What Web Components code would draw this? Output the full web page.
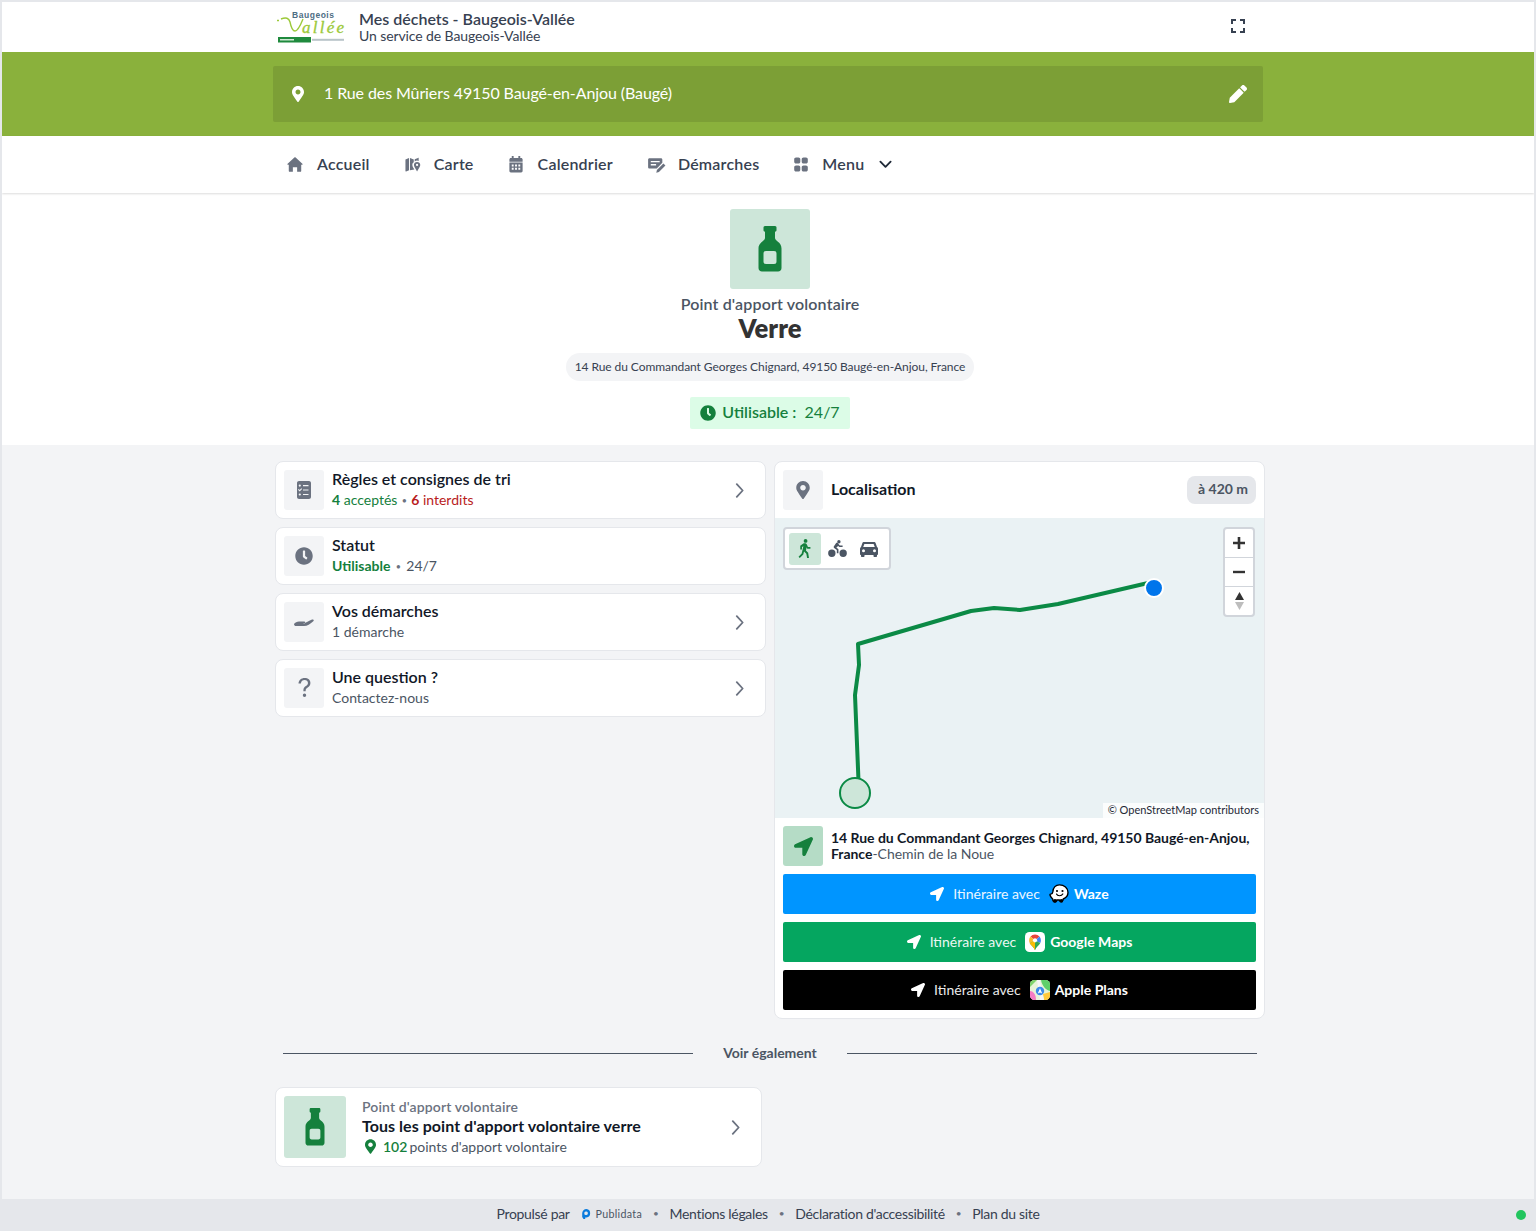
<!DOCTYPE html>
<html lang="fr">
<head>
<meta charset="utf-8">
<title>Mes déchets - Baugeois-Vallée</title>
<style>
  html, body { margin: 0; padding: 0; }
  body { font-family: Lato, "Liberation Sans", sans-serif; color: #111827; background: #e5e7eb; }
  .ok { color: #15803d; }
  .ko { color: #b91c1c; }
  .strong { font-weight: 700; }
  .dot { color: #6b7280; font-size: 9px; margin: 0 2px; vertical-align: 1px; }
  .dot.wide { margin: 0 3px; }
</style>
</head>
<body>

<md-page>
  <md-header></md-header>
  <md-address-bar>1 Rue des Mûriers 49150 Baugé-en-Anjou (Baugé)</md-address-bar>
  <md-nav>
    <md-nav-item icon="home" size="16" gap="14">Accueil</md-nav-item>
    <md-nav-item icon="map" size="18" gap="12">Carte</md-nav-item>
    <md-nav-item icon="calendar" size="16" gap="14">Calendrier</md-nav-item>
    <md-nav-item icon="edit" size="20" gap="11">Démarches</md-nav-item>
    <md-nav-item icon="grid" size="16" gap="13" more>Menu</md-nav-item>
  </md-nav>
  <md-hero></md-hero>
  <md-main>
    <div slot="left">
      <md-info-row icon="list" chevron>
        <span slot="title">Règles et consignes de tri</span>
        <span class="ok"><b class="strong">4</b> acceptés</span><span class="dot"> • </span><span class="ko"><b class="strong">6</b> interdits</span>
      </md-info-row>
      <md-info-row icon="clock">
        <span slot="title">Statut</span>
        <span class="ok strong">Utilisable</span><span class="dot wide"> • </span>24/7
      </md-info-row>
      <md-info-row icon="hand" chevron>
        <span slot="title">Vos démarches</span>
        1 démarche
      </md-info-row>
      <md-info-row icon="question" chevron>
        <span slot="title">Une question ?</span>
        Contactez-nous
      </md-info-row>
    </div>
    <md-map-card slot="right">
      <md-route-button color="#0095ff" brand="waze">Waze</md-route-button>
      <md-route-button color="#05a660" brand="google">Google Maps</md-route-button>
      <md-route-button color="#000000" brand="apple">Apple Plans</md-route-button>
    </md-map-card>
  </md-main>
  <md-see-also></md-see-also>
  <md-footer></md-footer>
</md-page>

<script>
// shapes for md-icon, everything is filled with currentColor
const ICONS = {
  pin: ['0 0 384 512', 'M172.268 501.67C26.97 291.031 0 261.6 0 192 0 85.961 85.961 0 192 0s192 85.961 192 192c0 69.6-26.97 99.031-172.268 309.67-9.535 13.774-29.93 13.773-39.464 0zM192 272c44.183 0 80-35.817 80-80s-35.817-80-80-80-80 35.817-80 80 35.817 80 80 80z'],
  pencil: ['0 0 512 512', 'M497.9 142.1l-46.1 46.1c-4.7 4.7-12.3 4.7-17 0l-111-111c-4.7-4.7-4.7-12.3 0-17l46.1-46.1c18.7-18.7 49.1-18.7 67.9 0l60.1 60.1c18.8 18.7 18.8 49.1 0 67.9zM284.2 99.8L21.6 362.4.4 483.9c-2.9 16.4 11.4 30.6 27.8 27.8l121.5-21.3 262.6-262.6c4.7-4.7 4.7-12.3 0-17l-111-111c-4.8-4.7-12.4-4.7-17.1 0z'],
  clock: ['0 0 512 512', 'M256,8C119,8,8,119,8,256S119,504,256,504,504,393,504,256,393,8,256,8Zm92.49,313h0l-20,25a16,16,0,0,1-22.49,2.5h0l-67-49.72a40,40,0,0,1-15-31.23V112a16,16,0,0,1,16-16h32a16,16,0,0,1,16,16V256l58,42.5A16,16,0,0,1,348.49,321Z'],
  arrow: ['0 0 512 512', 'M444.52 3.52L28.74 195.42c-47.97 22.39-31.98 92.75 19.19 92.75h175.91v175.91c0 51.17 70.36 67.17 92.75 19.19l191.9-415.78c15.99-38.39-25.59-79.97-63.97-63.97z'],
  expand: ['0 0 16 16', 'M1 1h5v2H3v3H1zM10 1h5v5h-2V3h-3zM1 10h2v3h3v2H1zM13 10h2v5h-5v-2h3z'],
  home: ['0 0 18 18', 'M9 .8c.3 0 .5.1.7.3l7.600 7c.5.5.2 1.300-.5 1.300H16v6.800c0 .6-.4 1-1 1h-3.600v-5H6.600v5H3c-.6 0-1-.4-1-1V9.400H1.200c-.7 0-1-.8-.5-1.300l7.600-7c.2-.2.4-.3.7-.3z'],
  map: ['0 0 18 18', 'M1 3.800 4.800 2v13l-3.100 1.400c-.4.200-.7 0-.7-.4zM5.800 2l4 1.600v3.100c-1 .6-1.500 1.600-1.500 2.700 0 1.500 1 3 2.200 4.800l-4.700.8zM10.800 3.500l3.500-1.500c.4-.2.700 0 .7.400v2.800a4 4 0 0 0-4.200.6zM13.300 6.300c1.900 0 3.400 1.400 3.400 3.200 0 1.800-1.800 3.900-3.400 6.900-1.600-3-3.300-5.100-3.300-6.900 0-1.800 1.400-3.200 3.300-3.200zm0 2a1.200 1.200 0 1 0 0 2.400 1.200 1.200 0 0 0 0-2.400z'],
  calendar: ['0 0 16 18', 'M3.500 0h2v2h5V0h2v2h1c.8 0 1.500.7 1.500 1.500V6H1V3.500C1 2.700 1.700 2 2.500 2h1zM1 7h14v9c0 .8-.7 1.500-1.500 1.500h-11C1.700 17.500 1 16.800 1 16zm2.500 2v2h2V9zm3.500 0v2h2V9zm3.500 0v2h2V9zm-7 3.500v2h2v-2zm3.500 0v2h2v-2zm3.500 0v2h2v-2z'],
  edit: ['0 0 22 18', 'M2.500 1.500h13c.8 0 1.500.7 1.500 1.500v3.600l-5.700 5.700-.4.700H2.500c-.8 0-1.500-.7-1.500-1.500V3c0-.8.7-1.500 1.500-1.500zM4 4.500V6h10V4.500zm0 3.500v1.500h6V8zM18.200 7.300l2.300 2.300-7.300 7.300-3 .7.700-3z'],
  grid: ['0 0 16 16', 'M3 1h2.500c1 0 1.800.8 1.800 1.800v2.400c0 1-.8 1.800-1.800 1.800H3c-1 0-1.800-.8-1.800-1.800V2.800C1.200 1.800 2 1 3 1zM10.500 1H13c1 0 1.800.8 1.800 1.800v2.400c0 1-.8 1.800-1.800 1.800h-2.500c-1 0-1.800-.8-1.800-1.800V2.800c0-1 .8-1.800 1.800-1.800zM3 9h2.500c1 0 1.800.8 1.800 1.800v2.400c0 1-.8 1.800-1.800 1.800H3c-1 0-1.800-.8-1.800-1.800v-2.400C1.200 9.800 2 9 3 9zM10.500 9H13c1 0 1.800.8 1.800 1.800v2.400c0 1-.8 1.800-1.800 1.800h-2.500c-1 0-1.800-.8-1.800-1.800v-2.400c0-1 .8-1.800 1.800-1.800z'],
  bottle: ['0 0 24 46', 'M7 0h10c1 0 1.500.8 1.500 1.500v2.500c0 1-.5 1.700-1.500 1.800v6.200c0 3 6.500 4 6.500 10.500V42c0 2-1.500 3.500-3.500 3.500H4C2 45.500.5 44 .5 42V22.500C.5 16 7 15 7 12V5.800C6 5.700 5.500 5 5.500 4V1.500C5.500.8 6 0 7 0zM8 25c-1.700 0-2.500.8-2.500 2.500v8c0 1.700.8 2.500 2.500 2.500h8c1.700 0 2.500-.8 2.500-2.500v-8c0-1.700-.8-2.500-2.500-2.500z'],
  list: ['0 0 14 18', 'M2 0h10c1.100 0 2 .9 2 2v14c0 1.100-.9 2-2 2H2c-1.100 0-2-.9-2-2V2C0 .9.9 0 2 0zm.8 3.500a1.100 1.100 0 1 0 0 2.200 1.100 1.100 0 0 0 0-2.200zM6 4v1.200h5.500V4zm-3.300 4.900L1.800 8 1 8.800l1.700 1.700 2.400-2.500-.8-.8zM6 8.400v1.200h5.500V8.400zm-3.200 4a1.100 1.100 0 1 0 0 2.200 1.100 1.100 0 0 0 0-2.200zM6 12.900v1.200h5.500v-1.200z'],
  hand: ['0 0 20 9', 'M0 6C1 4.500 3 3.500 5 3.500h5c1.500 0 1.500 2 0 2H8c3 .5 6-2.500 10-4 1.500-.5 2.500 1 1 2C16 6 13.500 8 10 8H2C1 8 0 7.500 0 6z'],
  question: ['0 0 14 22', 'M7.200 0C10.900 0 13.500 2.200 13.500 5.400c0 2.500-1.300 3.800-3 5-1.500 1-2.200 1.700-2.200 3.200v.9H5.800v-1.200c0-2.100 1-3.200 2.700-4.400 1.400-1 2.300-1.900 2.300-3.500C10.800 3.500 9.300 2.300 7.100 2.300 4.900 2.300 3.300 3.600 3 6H.4C.7 2.400 3.300 0 7.200 0zM7 17a1.900 1.900 0 1 1 0 3.800A1.900 1.900 0 0 1 7 17z'],
  walk: ['0 0 14 20', 'M7.600 0a2 2 0 1 1 0 4 2 2 0 0 1 0-4zM5.200 4.800c.8-.4 2-.5 2.800 0 .7.400 1 1 1.300 1.700l.8 2h2.600v1.800H9.400L8.700 8.700 8 12l2.300 2.400.9 5.600H9.200l-.8-4.600L6 13.200 5.200 16.300 1.500 20 .2 18.700l3.300-3.500L5.300 7.600 3.800 8.300V11H2V7.200z'],
  bike: ['0 0 20 18', 'M11.500 0a1.800 1.800 0 1 1 0 3.600 1.800 1.800 0 0 1 0-3.600zM8.400 3.400c.6-.5 1.500-.5 2 .1l2 2.300h3v1.700H12L10.700 6.300 8.800 8l2.200 1.700V14H9.300v-3.400L6.400 8.400c-.6-.5-.6-1.500 0-2zM4 10.100a3.900 3.900 0 1 1 0 7.800 3.900 3.900 0 0 1 0-7.800zM16 10.100a3.900 3.900 0 1 1 0 7.800 3.900 3.900 0 0 1 0-7.800z'],
  car: ['0 0 18 16', 'M4 1h10c.8 0 1.500.5 1.700 1.200L17 6c.6.300 1 1 1 1.700V13c0 .5-.4 1-1 1v1c0 .6-.4 1-1 1h-1.500c-.6 0-1-.4-1-1v-1h-9v1c0 .6-.4 1-1 1H2c-.6 0-1-.4-1-1v-1c-.6 0-1-.5-1-1V7.700C0 7 .4 6.300 1 6l1.300-3.800C2.500 1.500 3.200 1 4 1zm.4 2L3.200 6h11.600l-1.200-3zM3.500 8.300a1.500 1.500 0 1 0 0 3 1.500 1.500 0 0 0 0-3zm11 0a1.500 1.500 0 1 0 0 3 1.500 1.500 0 0 0 0-3z'],
  plus: ['0 0 12 12', 'M4.700 0h2.600v4.700H12v2.600H7.300V12H4.700V7.300H0V4.700h4.700z'],
  minus: ['0 0 12 12', 'M0 4.800h12v2.400H0z'],
  'chevron-right': ['0 0 10 16', 'M2 1l6.500 7L2 15', 'stroke'],
  'chevron-down': ['0 0 14 9', 'M1.500 1.500L7 7l5.500-5.500', 'stroke']
};

class MdIcon extends HTMLElement {
  connectedCallback() {
    const shape = ICONS[this.getAttribute('name')];
    const w = this.getAttribute('width') || 16;
    const h = this.getAttribute('height') || w;
    const paint = shape[2] ? 'fill="none" stroke="currentColor" stroke-width="2" stroke-linecap="round" stroke-linejoin="round"' : 'fill="currentColor" fill-rule="evenodd"';
    this.attachShadow({mode: 'open'}).innerHTML =
      '<style>:host { display: inline-flex; flex: none; } svg { display: block; }</style>' +
      '<svg width="' + w + '" height="' + h + '" viewBox="' + shape[0] + '"><path ' + paint + ' d="' + shape[1] + '"/></svg>';
  }
}
customElements.define('md-icon', MdIcon);

// small helper so every element below reads the same
function define(tag, html, extra) {
  const tpl = document.createElement('template');
  tpl.innerHTML = html;
  class El extends HTMLElement {
    constructor() {
      super();
      this.attachShadow({mode: 'open'}).appendChild(tpl.content.cloneNode(true));
    }
    connectedCallback() {
      if (extra) extra(this, this.shadowRoot);
    }
  }
  customElements.define(tag, El);
}

define('md-page', `
  <style>
    :host { height: 1229px; margin: 2px 2px 0; background: #f3f4f6; overflow: hidden; display: flex; flex-direction: column; }
  </style>
  <slot></slot>`);

define('md-header', `
  <style>
    :host { display: block; background: #fff; height: 50px; flex: none; }
    .wrap { width: 990px; margin: 0 auto; height: 50px; display: flex; align-items: center; }
    .logo { margin-left: 4px; margin-right: 14px; display: block; }
    .title { font-size: 16px; line-height: 17px; font-weight: 600; color: #374151; }
    .sub { font-size: 14px; line-height: 17px; color: #374151; letter-spacing: -.1px; }
    .text { flex: 1; padding-bottom: 1px; }
    md-icon { color: #374151; margin-right: 17px; margin-top: -2px; }
  </style>
  <div class="wrap">
    <svg class="logo" width="68" height="34" viewBox="0 0 68 34">
      <text x="15" y="8" font-family="Liberation Sans, sans-serif" font-weight="700" font-size="8.500" fill="#4d6d84" textLength="42">Baugeois</text>
      <path d="M0 10.500h2M4 9c5-2 8-1 9 3 1 5 2 9 5 9 3 0 6-7 8-12" fill="none" stroke="#9cc93a" stroke-width="1.400"/>
      <text x="25" y="23" font-family="Liberation Serif, serif" font-style="italic" font-size="17" fill="#9cc93a" stroke="#9cc93a" stroke-width=".3" textLength="42">allée</text>
      <rect x="1" y="27" width="33" height="5.500" fill="#1f8a3d"/>
      <rect x="3" y="29" width="14" height="1.500" fill="#cfe8d4"/>
      <rect x="35" y="28.800" width="32" height="2" fill="#b9c4c9"/>
    </svg>
    <div class="text">
      <div class="title">Mes déchets - Baugeois-Vallée</div>
      <div class="sub">Un service de Baugeois-Vallée</div>
    </div>
    <md-icon name="expand" width="16"></md-icon>
  </div>`);

define('md-address-bar', `
  <style>
    :host { display: block; background: #8ab13c; padding: 14px 0; flex: none; }
    .bar { width: 990px; height: 56px; margin: 0 auto; box-sizing: border-box; padding: 0 16px 0 19px; background: #7c9f36; border-radius: 2px; display: flex; align-items: center; color: #fff; font-size: 16px; letter-spacing: -.1px; }
    .txt { flex: 1; margin-left: 20px; padding-bottom: 4px; }
  </style>
  <div class="bar">
    <md-icon name="pin" width="12" height="16"></md-icon>
    <div class="txt"><slot></slot></div>
    <md-icon name="pencil" width="18"></md-icon>
  </div>`);

define('md-nav', `
  <style>
    :host { display: block; background: #fff; height: 57px; flex: none; box-shadow: 0 1px 2px rgba(0,0,0,.14); position: relative; z-index: 1; }
    .wrap { width: 990px; height: 57px; margin: 0 auto; box-sizing: border-box; padding-left: 14px; display: flex; align-items: center; gap: 34px; }
  </style>
  <div class="wrap"><slot></slot></div>`);

define('md-nav-item', `
  <style>
    :host { display: flex; align-items: center; font-size: 16px; font-weight: 600; color: #374151; letter-spacing: .2px; }
    .ico { color: #6b7280; display: flex; }
    .label { padding-bottom: 2px; }
    .more { color: #1f2937; margin-left: 15px; display: none; }
  </style>
  <span class="ico"></span>
  <span class="label"><slot></slot></span>
  <md-icon class="more" name="chevron-down" width="13" height="9"></md-icon>`, (el, root) => {
  const ico = root.querySelector('.ico');
  ico.style.marginRight = el.getAttribute('gap') + 'px';
  ico.innerHTML = '<md-icon name="' + el.getAttribute('icon') + '" width="' + el.getAttribute('size') + '" height="' + (el.getAttribute('icon') == 'edit' ? 16 : 17) + '"></md-icon>';
  if (el.hasAttribute('more')) root.querySelector('.more').style.display = 'inline-flex';
});

define('md-tile', `
  <style>
    :host { display: flex; flex: none; align-items: center; justify-content: center; width: 40px; height: 40px; background: #f3f4f6; color: #6b7280; border-radius: 3px; }
  </style>
  <slot></slot>`);

define('md-hero', `
  <style>
    :host { display: block; background: #fff; height: 252px; flex: none; text-align: center; padding-left: 4px; box-sizing: border-box; }
    .tile { width: 80px; height: 80px; margin: 16px auto 0; background: #cde6d9; border-radius: 3px; color: #15803d; display: flex; align-items: center; justify-content: center; }
    .kind { margin-top: 5px; font-size: 16px; line-height: 19px; font-weight: 600; color: #4b5563; letter-spacing: .15px; }
    h1 { margin: 1px 0 0; font-size: 25.600px; line-height: 28px; font-weight: 800; color: #333; }
    .addr { display: inline-block; margin-top: 11px; height: 28px; line-height: 28px; padding: 0 9px; border-radius: 14px; background: #f3f4f6; font-size: 12px; color: #374151; letter-spacing: -.07px; }
    .state { width: 160px; height: 32px; margin: 16px auto 0; background: #dcfce7; border-radius: 2px; color: #15803d; font-size: 16px; display: flex; align-items: center; justify-content: center; gap: 6px; }
    .state span { padding-bottom: 4px; }
    .state b { font-weight: 600; }
  </style>
  <div class="tile"><md-icon name="bottle" width="24" height="46"></md-icon></div>
  <div class="kind">Point d'apport volontaire</div>
  <h1>Verre</h1>
  <div class="addr">14 Rue du Commandant Georges Chignard, 49150 Baugé-en-Anjou, France</div>
  <div class="state"><md-icon name="clock" width="16"></md-icon><span><b>Utilisable :</b>&nbsp; 24/7</span></div>`);

define('md-main', `
  <style>
    :host { display: block; flex: none; padding-left: 4px; }
    .grid { width: 990px; margin: 16px auto 0; display: grid; grid-template-columns: 491px 491px; gap: 8px; align-items: start; }
  </style>
  <div class="grid"><slot name="left"></slot><slot name="right"></slot></div>`);

define('md-info-row', `
  <style>
    :host { display: flex; align-items: center; gap: 8px; height: 58px; box-sizing: border-box; padding: 0 8px; margin-bottom: 8px; background: #fff; border: 1px solid #e5e7eb; border-radius: 8px; }
    .body { flex: 1; padding-bottom: 1px; }
    .t { height: 20px; font-size: 16px; line-height: 20px; font-weight: 600; color: #111827; }
    .s { height: 20px; font-size: 14px; line-height: 20px; color: #4b5563; margin-top: 1px; }
    .chev { color: #6b7280; margin-right: 13px; display: none; }
  </style>
  <md-tile></md-tile>
  <div class="body">
    <div class="t"><slot name="title"></slot></div>
    <div class="s"><slot></slot></div>
  </div>
  <md-icon class="chev" name="chevron-right" width="9" height="15"></md-icon>`, (el, root) => {
  const name = el.getAttribute('icon');
  const size = {list: [14, 18], clock: [18, 18], hand: [20, 9], question: [13, 20]}[name];
  root.querySelector('md-tile').innerHTML = '<md-icon name="' + name + '" width="' + size[0] + '" height="' + size[1] + '"></md-icon>';
  if (el.hasAttribute('chevron')) root.querySelector('.chev').style.display = 'inline-flex';
});

define('md-map-card', `
  <style>
    :host { display: block; background: #fff; border: 1px solid #e5e7eb; border-radius: 8px; box-sizing: border-box; height: 558px; overflow: hidden; }
    .head { display: flex; align-items: center; gap: 8px; height: 56px; padding: 0 8px; box-sizing: border-box; }
    .head .t { flex: 1; font-size: 16px; font-weight: 700; color: #111827; padding-bottom: 4px; }
    .dist { height: 28px; line-height: 26px; padding: 0 8px 0 11px; border-radius: 8px; background: #e5e7eb; font-size: 14px; font-weight: 700; color: #4b5563; }
    .map { position: relative; height: 300px; background: #eaf2f4; overflow: hidden; }
    .map > svg { position: absolute; left: 0; top: 0; }
    .modes { position: absolute; left: 8px; top: 9px; width: 108px; height: 43px; box-sizing: border-box; background: #fff; border: 2px solid #d1d5db; border-radius: 4px; display: flex; align-items: center; padding-left: 4px; color: #4b5563; }
    .modes span { width: 32px; height: 32px; display: flex; align-items: center; justify-content: center; border-radius: 3px; }
    .modes span.on { background: #cde6d9; color: #15803d; }
    .zoom { position: absolute; left: 448px; top: 9px; width: 32px; height: 90px; box-sizing: border-box; background: #fff; border: 2px solid #d1d5db; border-radius: 4px; display: flex; flex-direction: column; color: #333; }
    .zoom span { flex: 1; display: flex; align-items: center; justify-content: center; }
    .zoom span + span { border-top: 1px solid #d1d5db; }
    .attr { position: absolute; right: 0; bottom: 0; height: 15px; line-height: 13px; padding: 0 5px; background: rgba(255,255,255,.8); font-size: 11px; color: #1f2937; }
    .dest { display: flex; align-items: center; gap: 8px; padding: 8px 8px 0; }
    .dest md-tile { background: #b5dcc6; color: #15803d; }
    .dest .lines { font-size: 14px; line-height: 16px; color: #4b5563; letter-spacing: -.03px; }
    .dest b { font-weight: 700; color: #111827; }
    .btns { display: flex; flex-direction: column; gap: 8px; padding: 8px 8px 0; }
  </style>
  <div class="head">
    <md-tile><md-icon name="pin" width="14" height="18"></md-icon></md-tile>
    <div class="t">Localisation</div>
    <div class="dist">à 420 m</div>
  </div>
  <div class="map">
    <svg width="489" height="300" viewBox="775 518 489 300">
      <polyline fill="none" stroke="#0b8a45" stroke-width="4" stroke-linejoin="round" points="1148,583 1058,604 1020,610 994,608 971,611 858,644 859,665 855,695 859,793"/>
      <circle cx="1154" cy="588" r="9" fill="#0075eb" stroke="#fff" stroke-width="2"/>
      <circle cx="855" cy="793" r="15" fill="#cde6d9" stroke="#0b8a45" stroke-width="2"/>
    </svg>
    <div class="modes">
      <span class="on"><md-icon name="walk" width="14" height="19"></md-icon></span>
      <span><md-icon name="bike" width="19" height="17"></md-icon></span>
      <span><md-icon name="car" width="18" height="16"></md-icon></span>
    </div>
    <div class="zoom">
      <span><md-icon name="plus" width="12"></md-icon></span>
      <span><md-icon name="minus" width="12"></md-icon></span>
      <span><svg width="9" height="18" viewBox="0 0 9 18"><path d="M4.500 0L9 8H0z" fill="#333"/><path d="M0 10h9l-4.500 8z" fill="#bdbdbd"/></svg></span>
    </div>
    <div class="attr">© OpenStreetMap contributors</div>
  </div>
  <div class="dest">
    <md-tile><md-icon name="arrow" width="19"></md-icon></md-tile>
    <div class="lines">
      <div><b>14 Rue du Commandant Georges Chignard, 49150 Baugé-en-Anjou,</b></div>
      <div><b>France</b>-Chemin de la Noue</div>
    </div>
  </div>
  <div class="btns"><slot></slot></div>`);

const BRANDS = {
  waze: '<svg width="20" height="20" viewBox="0 0 20 20"><path d="M10.500 .9C15.200 .9 19 4.200 19 8.500c0 3-1.800 5.200-4.700 6.500-.4 1.900-1.800 2.900-3.200 2.200-.5-.3-.8-.7-.9-1.200H8c-.3 1.500-2 2.400-3.400 1.400-.8-.6-1-1.400-.8-2.200C2.400 13.900 1.300 12.600 1 11c-.1-.6.300-.9.800-.9 1.400 0 1.800-.8 2-2.200C4.300 3.600 6.900.9 10.500.9z" fill="#fff" stroke="#000" stroke-width="1.400"/><circle cx="8" cy="7" r="1.100"/><circle cx="13.500" cy="7" r="1.100"/><path d="M7.500 10c1 2.300 5 2.300 6.300 0" fill="none" stroke="#000" stroke-width="1.200" stroke-linecap="round"/><circle cx="6" cy="16.800" r="1.900"/><circle cx="12.300" cy="16.800" r="1.900"/></svg>',
  google: '<svg width="20" height="20" viewBox="0 0 20 20"><rect width="20" height="20" rx="4.500" fill="#fff"/><path d="M10 2.500a6 6 0 0 0-4.500 2L10 8.400l4.500-3.900a6 6 0 0 0-4.500-2z" fill="#e8453c"/><path d="M5.500 4.500A5.800 5.800 0 0 0 4.100 8.300c0 1 .2 1.900.6 2.700L10 8.400z" fill="#f9bb2d"/><path d="M14.500 4.500 10 8.400l5.300 2.600c.4-.8.600-1.700.6-2.700a5.800 5.800 0 0 0-1.400-3.800z" fill="#4285f4"/><path d="M15.300 11 10 8.400 4.700 11c1.200 2.500 4.100 4 5.300 7.200 1.200-3.200 4.100-4.700 5.300-7.200z" fill="#34a853"/><path d="M4.700 11c1.200 2.500 4.100 4 5.300 7.200V8.400z" fill="#fbbc04"/><circle cx="10" cy="8.300" r="2.100" fill="#fff"/></svg>',
  apple: '<svg width="20" height="20" viewBox="0 0 20 20"><defs><clipPath id="c"><rect width="20" height="20" rx="4.500"/></clipPath></defs><g clip-path="url(#c)"><rect width="20" height="20" fill="#e6f3d8"/><path d="M0 0h7L0 7z" fill="#7ed36b"/><path d="M11 0h9v11c-4-1-8-5-9-11z" fill="#5fd06a"/><path d="M0 11c3 0 6 3 6 9H0z" fill="#f47cc4"/><path d="M13 14l7-2v8h-6z" fill="#ffc93c"/><path d="M7 0h3l4 20H10z" fill="#f5f5f5"/><circle cx="10" cy="11" r="4.200" fill="#3c8bea"/><path d="M10 8.300l2.200 5.200-2.200-1-2.200 1z" fill="#fff"/></g></svg>'
};

define('md-route-button', `
  <style>
    :host { display: flex; align-items: center; justify-content: center; height: 40px; border-radius: 2px; color: #fff; font-size: 14px; }
    md-icon { margin-right: 9px; }
    .w { opacity: .92; padding-bottom: 2px; }
    .b { margin: 0 5px 0 9px; display: flex; }
    strong { font-weight: 700; padding-bottom: 2px; }
  </style>
  <md-icon name="arrow" width="14"></md-icon>
  <span class="w">Itinéraire avec</span>
  <span class="b"></span>
  <strong><slot></slot></strong>`, (el, root) => {
  el.style.background = el.getAttribute('color');
  root.querySelector('.b').innerHTML = BRANDS[el.getAttribute('brand')];
});

define('md-see-also', `
  <style>
    :host { display: block; flex: none; padding-left: 4px; }
    .wrap { width: 990px; margin: 0 auto; }
    .sep { display: flex; align-items: center; margin: 25px 8px 25px; gap: 30px; font-size: 14px; font-weight: 700; color: #4b5563; line-height: 18px; }
    .sep i { flex: 1; height: 1px; background: #4b5563; }
    .card { width: 487px; height: 80px; box-sizing: border-box; padding: 8px; display: flex; align-items: center; gap: 16px; background: #fff; border: 1px solid #e5e7eb; border-radius: 8px; }
    .tile { width: 62px; height: 62px; flex: none; background: #cde6d9; border-radius: 3px; color: #15803d; display: flex; align-items: center; justify-content: center; }
    .body { flex: 1; }
    .k { font-size: 14px; line-height: 18px; font-weight: 600; color: #6b7280; letter-spacing: .12px; }
    .t { font-size: 16px; line-height: 20px; font-weight: 700; color: #111827; letter-spacing: .05px; }
    .n { font-size: 14px; line-height: 20px; color: #4b5563; display: flex; align-items: center; padding-left: 3px; margin-top: 1px; }
    .n md-icon { color: #15803d; margin-right: 7px; }
    .n b { color: #15803d; font-weight: 600; margin-right: 2px; }
    .chev { color: #6b7280; margin-right: 13px; }
  </style>
  <div class="wrap">
    <div class="sep"><i></i><span>Voir également</span><i></i></div>
    <div class="card">
      <div class="tile"><md-icon name="bottle" width="20" height="38"></md-icon></div>
      <div class="body">
        <div class="k">Point d'apport volontaire</div>
        <div class="t">Tous les point d'apport volontaire verre</div>
        <div class="n"><md-icon name="pin" width="11" height="15"></md-icon><b>102</b>points d'apport volontaire</div>
      </div>
      <md-icon class="chev" name="chevron-right" width="9" height="15"></md-icon>
    </div>
  </div>`);

define('md-footer', `
  <style>
    :host { display: flex; align-items: center; justify-content: center; position: relative; margin-top: auto; height: 32px; box-sizing: border-box; padding-bottom: 4px; flex: none; background: #e5e7eb; font-size: 14px; color: #374151; letter-spacing: -.32px; }
    .sep { color: #6b7280; margin: 0 11px; font-size: 10px; }
    .brand { display: inline-flex; align-items: center; font-size: 10.700px; letter-spacing: .3px; color: #4b5563; margin-left: 12px; gap: 5px; padding-top: 1px; }
    .live { position: absolute; right: 8px; top: 11px; width: 10px; height: 10px; border-radius: 50%; background: #22c55e; }
  </style>
  <span>Propulsé par</span>
  <span class="brand"><svg width="9" height="10" viewBox="0 0 9 10"><path fill="#0b7bdc" fill-rule="evenodd" d="M4.500 0a4.300 4.300 0 0 1 0 8.500H3.200V10H1.500L.2 8V4.300A4.300 4.300 0 0 1 4.500 0zm0 2.500a1.800 1.800 0 1 0 0 3.500 1.800 1.800 0 0 0 0-3.500z"/></svg>Publidata</span>
  <span class="sep">•</span>
  <span>Mentions légales</span>
  <span class="sep">•</span>
  <span>Déclaration d'accessibilité</span>
  <span class="sep">•</span>
  <span>Plan du site</span>
  <span class="live"></span>`);
</script>
</body>
</html>
